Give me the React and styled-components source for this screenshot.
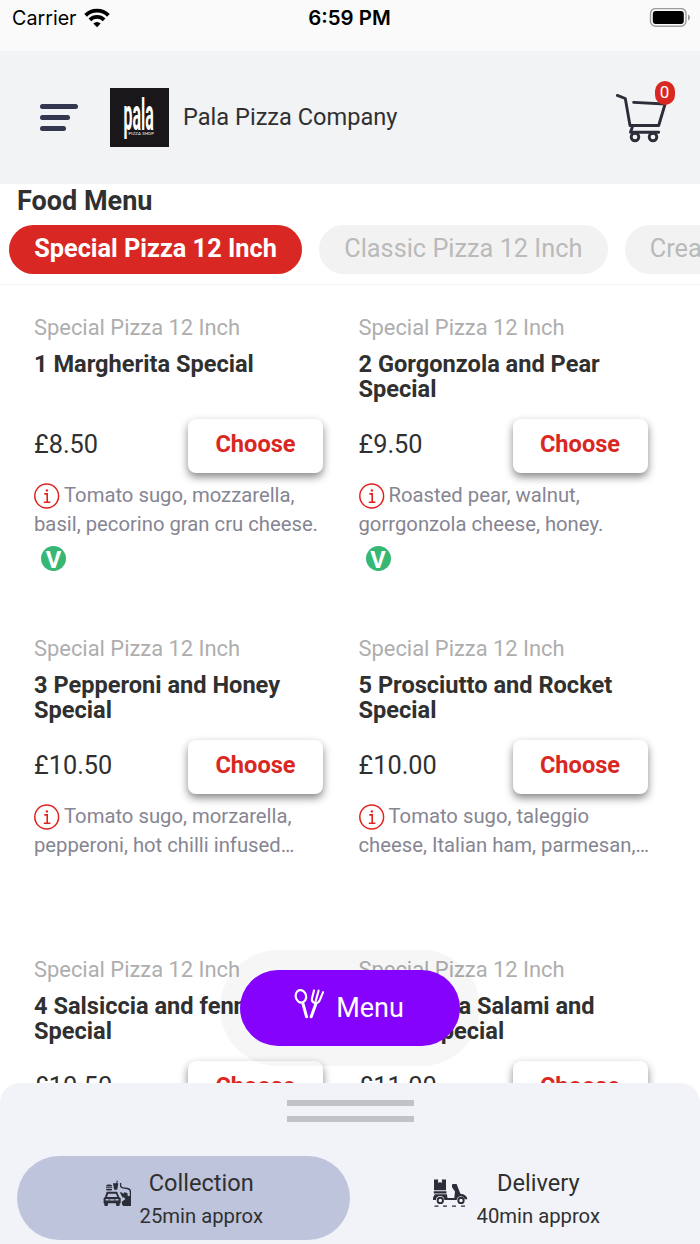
import React from 'react';
import styled, { createGlobalStyle } from 'styled-components';

const GlobalStyle = createGlobalStyle`
  * { box-sizing: border-box; }
  body { margin: 0; background: #fff; }
  button { font: inherit; border: 0; padding: 0; margin: 0; }
  h1, h2, h3, p { margin: 0; }
`;

const categories = ['Special Pizza 12 Inch', 'Classic Pizza 12 Inch', 'Create Your Own'];

const foods = [
  { name: '1 Margherita Special', price: '£8.50', info: 'Tomato sugo, mozzarella, basil, pecorino gran cru cheese.', veg: true },
  { name: '2 Gorgonzola and Pear Special', price: '£9.50', info: 'Roasted pear, walnut, gorrgonzola cheese, honey.', veg: true },
  { name: '3 Pepperoni and Honey Special', price: '£10.50', info: 'Tomato sugo, morzarella, pepperoni, hot chilli infused…' },
  { name: '5 Prosciutto and Rocket Special', price: '£10.00', info: 'Tomato sugo, taleggio cheese, Italian ham, parmesan,…' },
  { name: '4 Salsiccia and fennel Special', price: '£10.50', info: '' },
  { name: '6 Spianata Salami and Nduja Special', price: '£11.00', info: '' },
];

function WifiIcon() {
  return (
    <svg width="26" height="20" viewBox="0 0 26 20">
      <g fill="none" stroke="#000" strokeWidth="3.8">
        <path d="M1.6 7.4a16.2 16.2 0 0 1 22.8 0" />
        <path d="M5.9 11.8a10.1 10.1 0 0 1 14.2 0" />
      </g>
      <path d="M13 19.2l-3.7-3.7a5.2 5.2 0 0 1 7.4 0z" fill="#000" />
    </svg>
  );
}

function BatteryIcon() {
  return (
    <svg width="42" height="20" viewBox="0 0 42 20">
      <rect x="1.500" y=".6" width="35.500" height="17.600" rx="5" fill="none" stroke="#9c9c9c" strokeWidth="1.400" />
      <rect x="3.800" y="2.900" width="31" height="13" rx="3" fill="#000" />
      <path d="M39 6.400c2.600 1.200 2.600 4.800 0 6z" fill="#9c9c9c" />
    </svg>
  );
}

function CartIcon() {
  return (
    <svg width="52" height="50" viewBox="0 0 52 50" fill="none" stroke="#2d2d3a" strokeWidth="2.9" strokeLinecap="round" strokeLinejoin="round">
      <path d="M1.300 2.400l8 3.100 4.700 27H42.700L49.100 11 17.700 9.400" />
      <path d="M16.700 33l-2.200 6.200H42.700" />
      <circle cx="19" cy="44" r="3.800" />
      <circle cx="37" cy="44" r="3.800" />
    </svg>
  );
}

function InfoIcon() {
  return (
    <svg width="26" height="26" viewBox="0 0 26 26" fill="none" stroke="#e0231f">
      <circle cx="12.700" cy="13" r="11.900" strokeWidth="1.500" />
      <path d="M10.300 10.900h2.900v8M9.800 19.200h6.600" strokeWidth="1.600" />
      <circle cx="12.900" cy="7.400" r="1.200" fill="#e0231f" stroke="none" />
    </svg>
  );
}

function CutleryIcon() {
  return (
    <svg width="32" height="32" viewBox="0 0 32 32" fill="none" stroke="#fff" strokeLinecap="round" strokeLinejoin="round">
      <ellipse cx="6.900" cy="8.300" rx="5.200" ry="6.300" transform="rotate(-14 6.900 8.300)" strokeWidth="2.200" />
      <path d="M8.900 15.400l3.700 13.400" strokeWidth="3" />
      <path d="M22 15.400l-4.800 13.400" strokeWidth="3" />
      <path d="M20 2.400l-2.100 8.400c-.6 4.200 5.800 6 7.600 2l3.600-8.600M24.600 2.600l-2.800 10.200" strokeWidth="2.100" />
    </svg>
  );
}

function PickupIcon() {
  return (
    <svg width="28" height="28" viewBox="0 0 28 28" fill="#2b2d38">
      {/* burger and drink */}
      <path d="M3 6.600q0-2 2.200-2H7q2.200 0 2.200 2zM3 7.300h6.200v1H3zM3 9h6.200q0 1.600-1.500 1.600H4.500Q3 10.600 3 9z" />
      <path d="M9.900 3.300h3.300l.6-2.800 1 .2-.6 2.600h1.200l-1.200 6.500h-3z" />
      {/* car */}
      <path fillRule="evenodd" d="M3.700 11.700h10.400l2.100 5.200 1.500 1.400v5H.6v-5l1.400-1.400zM5.200 13.700L4 17h10.300L13 13.700zM2.700 19v1.600h2.800V19zm9.800 0v1.600h2.900V19zM6.300 19.300v1.100h5.300v-1.100z" />
      <rect x="1.300" y="22.500" width="3.700" height="3.400" rx=".8" />
      <rect x="13" y="22.500" width="3.700" height="3.400" rx=".8" />
      {/* driver */}
      <path d="M17.600 3v2.300q0 2.200 2.200 2.500l4.600.7q3 .5 3 3.600v13.400" fill="none" stroke="#2b2d38" strokeWidth="1.300" />
      <path d="M17 12.800l1-.9 2.300 1.800 1-1.400 3 .7.6 3.200 3.100-.7v10.400h-7.800q-2-1.700-1.200-4.300l3.300-2.400-1.500-2.200-1 1.100z" />
    </svg>
  );
}

function ScooterIcon() {
  return (
    <svg width="36" height="30" viewBox="0 0 36 30" fill="#2b2d38">
      <path d="M2 1.500h4.100V5l1.900-1.100L9.900 5V1.500H14v10.800H2z" />
      <path d="M1.800 13.300h12.600v2.200H1.800zM2.700 16.200h12.200l.6 3.900h6.800l.7-6.500-3-4.300V7.100q0-1 1-1h3.600l3.800 9.600q6.300.6 7 5.600h-2.700q-1-3.100-4.100-3.100-3.200 0-4 3.900H12.400q-.4-4-4.200-4t-4.400 4H1v-2.300z" />
      <circle cx="8.300" cy="22.400" r="2.700" fill="none" stroke="#2b2d38" strokeWidth="1.900" />
      <circle cx="29" cy="22.400" r="2.700" fill="none" stroke="#2b2d38" strokeWidth="1.900" />
      <path d="M2.500 28.100h4M11 28.100h4M20 28.100h4M29 28.100h4" stroke="#2b2d38" strokeWidth="1.100" />
    </svg>
  );
}

function FoodCard({ food }) {
  return (
    <Card>
      <CardCategory>Special Pizza 12 Inch</CardCategory>
      <CardTitle>{food.name}</CardTitle>
      <PriceRow>
        <Price>{food.price}</Price>
        <ChooseButton>Choose</ChooseButton>
      </PriceRow>
      <Info><InfoIcon />{food.info}</Info>
      {food.veg && <VegBadge>V</VegBadge>}
    </Card>
  );
}

export default function App() {
  return (
    <Phone>
      <GlobalStyle />
      <StatusBar>
        <Carrier>Carrier <WifiIcon /></Carrier>
        <Clock>6:59 PM</Clock>
        <Battery><BatteryIcon /></Battery>
      </StatusBar>

      <Header>
        <MenuLines>
          <Line $w={38} />
          <Line $w={30} />
          <Line $w={26} />
        </MenuLines>
        <Logo>
          <svg width="59" height="59" viewBox="0 0 59 59" fill="#fff" fontFamily="Roboto, sans-serif">
            <text transform="translate(13.500 41.500) scale(.52 1.500)" fontSize="29" fontWeight="700" textLength="58" lengthAdjust="spacingAndGlyphs">pala</text>
            <text x="18.500" y="46.800" fontSize="4.400" textLength="25.500">PIZZA SHOP</text>
          </svg>
        </Logo>
        <ShopName>Pala Pizza Company</ShopName>
        <Cart>
          <CartIcon />
          <CartCount>0</CartCount>
        </Cart>
      </Header>

      <Heading>Food Menu</Heading>
      <Tabs>
        {categories.map((item, i) => (
          <Tab key={item} $active={i === 0}>{item}</Tab>
        ))}
      </Tabs>

      <FoodList>
        {foods.map((food) => <FoodCard key={food.name} food={food} />)}
      </FoodList>

      <MenuHalo>
        <MenuButton><CutleryIcon />Menu</MenuButton>
      </MenuHalo>

      <Sheet>
        <Grip><span /><span /></Grip>
        <Options>
          <Option $active>
            <PickupIcon />
            <OptionText>
              <OptionName>Collection</OptionName>
              <OptionTime>25min approx</OptionTime>
            </OptionText>
          </Option>
          <Option>
            <ScooterIcon />
            <OptionText>
              <OptionName>Delivery</OptionName>
              <OptionTime>40min approx</OptionTime>
            </OptionText>
          </Option>
        </Options>
      </Sheet>
    </Phone>
  );
}

const Phone = styled.div`
  position: relative;
  display: flex;
  flex-direction: column;
  width: 700px;
  height: 1244px;
  overflow: hidden;
  background: #fff;
  color: #303030;
  font-family: Roboto, "Liberation Sans", sans-serif;
`;

const StatusBar = styled.div`
  display: grid;
  grid-template-columns: 1fr auto 1fr;
  align-items: center;
  height: 51px;
  padding: 0 9px 16px 12px;
  background: #fafafa;
  color: #000;
  font-family: Inter, "Liberation Sans", sans-serif;
  font-size: 19.700px;
`;

const Carrier = styled.div`
  display: flex;
  align-items: center;
  gap: 7px;
`;

const Clock = styled.div`
  margin-right: 4px;
  font-size: 20.400px;
  font-weight: 600;
`;

const Battery = styled.div`
  display: flex;
  justify-content: flex-end;
`;

const Header = styled.header`
  display: flex;
  align-items: center;
  flex: none;
  height: 133px;
  padding: 0 24px 0 40px;
  background: #f2f3f5;
`;

const MenuLines = styled.div`
  display: flex;
  flex-direction: column;
  gap: 6px;
  width: 70px;
`;

const Line = styled.span`
  width: ${(p) => p.$w}px;
  height: 5px;
  border-radius: 3px;
  background: #33364f;
`;

const Logo = styled.div`
  width: 59px;
  height: 59px;
  background: #191719;
  svg { display: block; }
`;

const ShopName = styled.h1`
  flex: 1;
  margin-left: 14px;
  padding-bottom: 2px;
  font-size: 23.600px;
  font-weight: 400;
`;

const Cart = styled.div`
  position: relative;
  width: 60px;
  height: 50px;
  svg { display: block; }
`;

const CartCount = styled.span`
  position: absolute;
  top: -12px;
  left: 38.500px;
  width: 20px;
  height: 24px;
  border-radius: 10px;
  background: #d92823;
  color: #fff;
  font-size: 17px;
  line-height: 23px;
  text-align: center;
`;

const Heading = styled.h2`
  height: 41px;
  padding-left: 17px;
  font-size: 27px;
  font-weight: 700;
  line-height: 35px;
`;

const Tabs = styled.div`
  display: flex;
  flex: none;
  gap: 17px;
  height: 60px;
  padding-left: 9px;
  overflow: hidden;
  border-bottom: 1px solid #f4f4f4;
`;

const Tab = styled.button`
  flex: none;
  height: 49px;
  padding: 0 25.200px 3px;
  border-radius: 25px;
  background: ${(p) => (p.$active ? '#d92823' : '#f2f2f2')};
  color: ${(p) => (p.$active ? '#fff' : '#bababa')};
  font-size: 25.300px;
  font-weight: ${(p) => (p.$active ? 700 : 400)};
`;

const FoodList = styled.div`
  display: grid;
  grid-template-columns: 289px 289px;
  grid-auto-rows: 321px;
  column-gap: 35.500px;
  flex: 1;
  min-height: 0;
  padding: 30px 34px 0;
  overflow: hidden;
`;

const Card = styled.article`
  display: flex;
  flex-direction: column;
`;

const CardCategory = styled.p`
  height: 37px;
  color: #aeaeae;
  font-size: 21.900px;
  line-height: 26px;
`;

const CardTitle = styled.h3`
  height: 67px;
  font-size: 23.600px;
  font-weight: 700;
  line-height: 25px;
`;

const PriceRow = styled.div`
  display: flex;
  align-items: center;
  justify-content: space-between;
  height: 54px;
`;

const Price = styled.span`
  padding-bottom: 3px;
  font-size: 25.300px;
`;

const ChooseButton = styled.button`
  width: 135px;
  height: 54px;
  padding-bottom: 4px;
  border-radius: 8px;
  background: #fff;
  box-shadow: 0 4px 8px rgba(0, 0, 0, .48);
  color: #d92823;
  font-size: 23.600px;
  font-weight: 700;
`;

const Info = styled.p`
  margin: 8px -5px 0 0;
  color: #868592;
  font-size: 20.250px;
  line-height: 28.500px;
  svg { margin: 0 4px 0 0; vertical-align: -7px; }
`;

const VegBadge = styled.span`
  width: 25px;
  height: 25px;
  margin: 8px 0 0 7px;
  border-radius: 50%;
  background: #37b774;
  color: #fff;
  font-size: 23.700px;
  font-weight: 700;
  line-height: 28px;
  text-align: center;
`;

const MenuHalo = styled.div`
  position: absolute;
  top: 950px;
  left: 220px;
  width: 260px;
  height: 116px;
  padding: 20px;
  border-radius: 58px;
  background: rgba(0, 0, 0, .035);
`;

const MenuButton = styled.button`
  display: flex;
  align-items: center;
  justify-content: center;
  gap: 10px;
  width: 220px;
  height: 76px;
  padding-right: 2px;
  border-radius: 38px;
  background: #8502fc;
  color: #fff;
  font-size: 27px;
  svg { margin-top: -8px; }
`;

const Sheet = styled.footer`
  flex: none;
  height: 161px;
  border-radius: 20px 20px 0 0;
  background: #f1f3f9;
`;

const Grip = styled.div`
  display: flex;
  flex-direction: column;
  gap: 10px;
  width: 127px;
  height: 73px;
  margin: 0 auto;
  padding-top: 17px;
  span { height: 6px; background: #c1c2c6; }
`;

const Options = styled.div`
  display: grid;
  grid-template-columns: 333px 333px;
  padding-left: 17px;
`;

const Option = styled.div`
  display: flex;
  align-items: flex-start;
  justify-content: center;
  gap: 8.500px;
  height: 84px;
  padding: 10px 1px 0 0;
  border-radius: 42px;
  background: ${(p) => (p.$active ? '#bec4dc' : 'transparent')};
  svg { margin-top: ${(p) => (p.$active ? 14 : 12)}px; }
`;

const OptionText = styled.div`
  display: flex;
  flex-direction: column;
  align-items: center;
  gap: 4px;
`;

const OptionName = styled.span`
  font-size: 23.600px;
  line-height: 34px;
`;

const OptionTime = styled.span`
  font-size: 20.250px;
  line-height: 24px;
`;
